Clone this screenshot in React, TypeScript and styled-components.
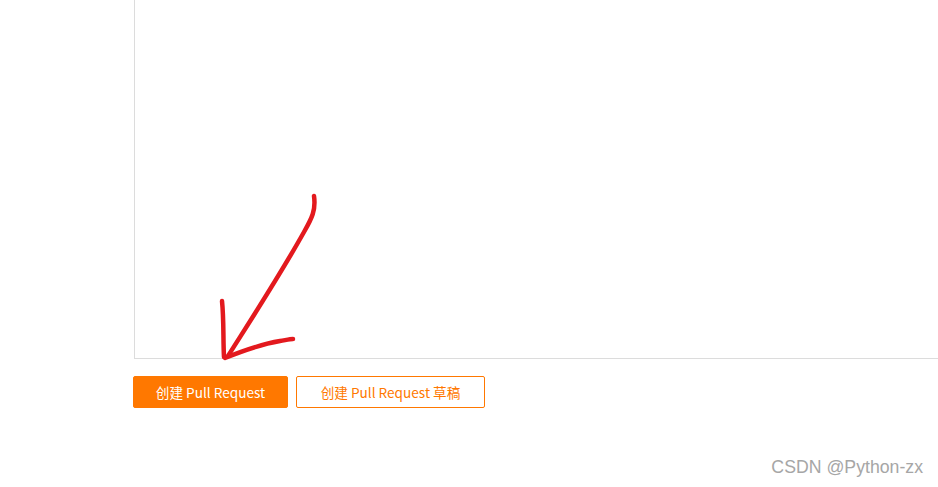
import React from "react";
import styled, { createGlobalStyle } from "styled-components";

const GlobalStyle = createGlobalStyle`
  html, body {
    margin: 0;
    padding: 0;
    background: #ffffff;
  }
  body {
    font-family: "Liberation Sans", "Noto Sans CJK SC", sans-serif;
    width: 938px;
    height: 487px;
    overflow: hidden;
  }
`;

const Page = styled.div`
  position: relative;
  width: 938px;
  height: 487px;
  padding-left: 133px;
  box-sizing: border-box;
  overflow: hidden;
`;

const Editor = styled.div`
  margin-left: 1px;
  width: 820px;
  height: 358px;
  border-left: 1px solid #dcdcdc;
  border-bottom: 1px solid #dcdcdc;
  background: #ffffff;
`;

const Actions = styled.div`
  display: flex;
  gap: 8px;
  margin-top: 17px;
`;

const Button = styled.button<{ $primary?: boolean }>`
  height: 32px;
  padding: 0;
  border: 1px solid #ff7800;
  border-radius: 2px;
  background: ${(p) => (p.$primary ? "#ff7800" : "#ffffff")};
  color: ${(p) => (p.$primary ? "#ffffff" : "#ff7800")};
  font-family: "Noto Sans CJK SC", "Liberation Sans", sans-serif;
  font-size: 13.6px;
  line-height: 30px;
  cursor: pointer;
  white-space: nowrap;
`;

const Scribble = styled.svg`
  position: absolute;
  left: 0;
  top: 0;
  pointer-events: none;
`;

const Watermark = styled.div`
  position: absolute;
  right: 15px;
  bottom: 9px;
  font-family: "Liberation Sans", sans-serif;
  font-size: 17.7px;
  color: #a6a6a6;
`;

export default function App() {
  return (
    <>
      <GlobalStyle />
      <Page>
        <Editor />
        <Actions>
          <Button $primary style={{ width: 155 }}>创建 Pull Request</Button>
          <Button style={{ width: 189 }}>创建 Pull Request 草稿</Button>
        </Actions>
        <Scribble width="938" height="487" viewBox="0 0 938 487">
          <g
            fill="none"
            stroke="#e3191e"
            strokeWidth="4.5"
            strokeLinecap="round"
            strokeLinejoin="round"
          >
            <path d="M314 196 C 316 210, 312 218, 304 232 C 280 275, 252 318, 228 356" />
            <path d="M222 301 C 224 320, 223 340, 224 357" />
            <path d="M225 358 C 245 350, 262 344, 280 341 C 286 340, 290 339, 293 339" />
          </g>
        </Scribble>
        <Watermark>CSDN @Python-zx</Watermark>
      </Page>
    </>
  );
}
